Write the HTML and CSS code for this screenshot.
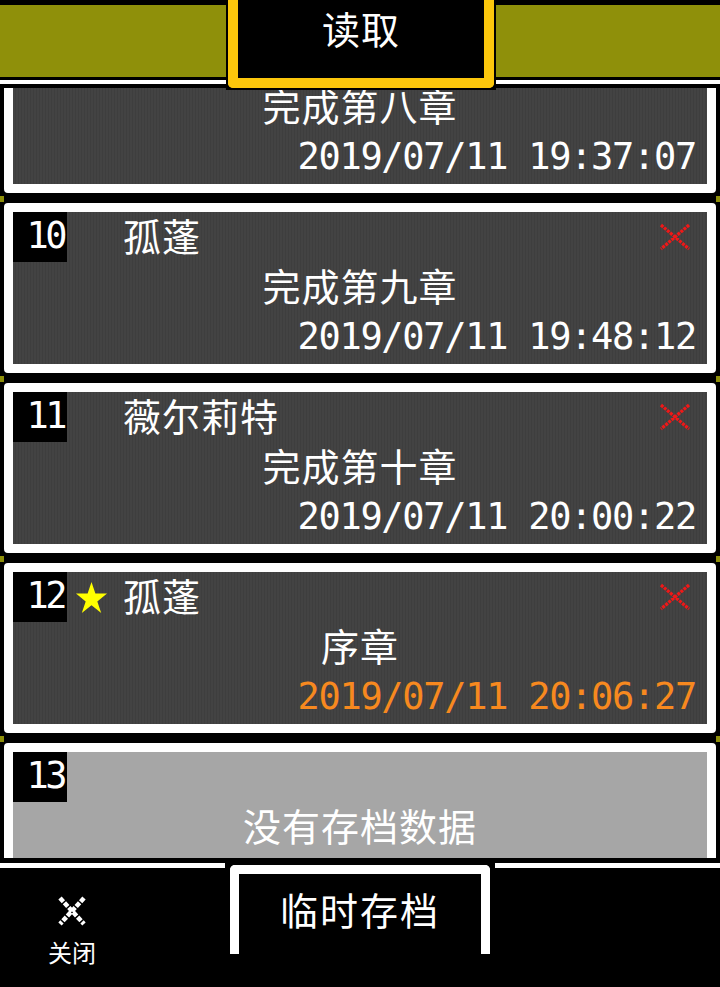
FILE: index.html
```html
<!DOCTYPE html>
<html lang="zh-CN">
<head>
    <meta charset="UTF-8">
    <meta name="viewport" content="width=device-width, initial-scale=1.0">
    <title>读取</title>
    <link rel="stylesheet" href="styles.css">
</head>
<body>
    <div class="screen">
        <div class="header">
            <div class="header-side"></div>
            <div class="header-tab"><div class="header-tab-face">读取</div></div>
            <div class="header-side"></div>
        </div>

        <div class="save-list">
            <div class="save-list-inner">
                <!-- верх карточки 9 спрятан под шапкой -->
                <div class="save-card">
                    <div class="card-head"></div>
                    <div class="card-title">完成第八章</div>
                    <div class="card-date">2019/07/11 19:37:07</div>
                </div>

                <div class="save-card">
                    <div class="card-head">
                        <div class="card-num">10</div>
                        <div class="card-mark"></div>
                        <div class="card-name">孤蓬</div>
                        <svg class="card-del" viewBox="0 0 34 30"><path d="M3 3 L31 27 M31 3 L3 27"/></svg>
                    </div>
                    <div class="card-title">完成第九章</div>
                    <div class="card-date">2019/07/11 19:48:12</div>
                </div>

                <div class="save-card">
                    <div class="card-head">
                        <div class="card-num">11</div>
                        <div class="card-mark"></div>
                        <div class="card-name">薇尔莉特</div>
                        <svg class="card-del" viewBox="0 0 34 30"><path d="M3 3 L31 27 M31 3 L3 27"/></svg>
                    </div>
                    <div class="card-title">完成第十章</div>
                    <div class="card-date">2019/07/11 20:00:22</div>
                </div>

                <div class="save-card">
                    <div class="card-head">
                        <div class="card-num">12</div>
                        <div class="card-mark">
                            <svg class="star" viewBox="0 0 34 34"><polygon points="17,1 21,13 33,13 23,21 27,33 17,25 7,33 11,21 1,13 13,13"/></svg>
                        </div>
                        <div class="card-name">孤蓬</div>
                        <svg class="card-del" viewBox="0 0 34 30"><path d="M3 3 L31 27 M31 3 L3 27"/></svg>
                    </div>
                    <div class="card-title">序章</div>
                    <div class="card-date card-date-latest">2019/07/11 20:06:27</div>
                </div>

                <div class="save-card save-card-empty">
                    <div class="card-head">
                        <div class="card-num">13</div>
                    </div>
                    <div class="card-title">没有存档数据</div>
                </div>
            </div>
        </div>

        <div class="footer">
            <div class="footer-side">
                <div class="close-btn">
                    <svg class="close-icon" viewBox="0 0 30 32"><path d="M3 3 L27 29 M27 3 L3 29"/></svg>
                    <span class="close-label">关闭</span>
                </div>
            </div>
            <div class="footer-tab">临时存档</div>
            <div class="footer-side"></div>
        </div>
    </div>
</body>
</html>
```

FILE: styles.css
```css
body {
    margin: 0;
    background-color: #000;
    color: #fff;
    font-family: "Noto Sans CJK SC", "Noto Sans", sans-serif;
    overflow: hidden;
}

.screen {
    width: 720px;
    height: 987px;
    display: flex;
    flex-direction: column;
}

/* верхняя панель */
.header {
    display: grid;
    grid-template-columns: 226px 270px 224px;
    align-items: start;
    height: 88px;
    position: relative;
    z-index: 2;
}

.header-side {
    margin-top: 5px;
    height: 83px;
    background: linear-gradient(#8f900a 0 72px, #000 72px 75px, #fff 75px 79px, #000 79px);
}

.header-tab {
    height: 90px;
    box-sizing: border-box;
    padding: 0 2px 2px;
    background-color: #000;
}

.header-tab-face {
    height: 100%;
    box-sizing: border-box;
    border: 10px solid #fcc70c;
    border-top: 0;
    border-radius: 0 0 5px 5px;
    text-align: center;
    font-size: 38px;
    letter-spacing: 1px;
    line-height: 56px;
}

/* список сохранений */
.save-list {
    flex: 0 0 770px;
    overflow: hidden;
    background-color: #000;
}

.save-list-inner {
    margin-top: -65px;
    padding: 0 4px;
    display: flex;
    flex-direction: column;
    gap: 10px;
}

.save-card {
    position: relative;
    height: 170px;
    box-sizing: border-box;
    border: 9px solid #fff;
    border-radius: 4px;
    padding-bottom: 3px;
    background: repeating-linear-gradient(90deg, #434343 0 2px, #3e3e3e 2px 3px);
    display: grid;
    grid-template-rows: 50px 50px 50px;
    align-items: center;
}

.save-card::after {
    content: "";
    position: absolute;
    left: -13px;
    right: -13px;
    top: calc(100% + 12px);
    height: 6px;
    background: linear-gradient(90deg, #8f900a 0 4px, transparent 4px calc(100% - 4px), #8f900a calc(100% - 4px));
}

.save-card-empty {
    background: #a6a6a6;
}

.card-head {
    height: 50px;
    display: flex;
    align-items: center;
}

.card-num {
    width: 54px;
    height: 50px;
    box-sizing: border-box;
    padding-right: 3px;
    background-color: #000;
    text-align: right;
    font-family: "DejaVu Sans Mono", monospace;
    font-size: 37px;
    letter-spacing: -3.5px;
    line-height: 48px;
}

.card-mark {
    width: 56px;
    height: 50px;
    display: flex;
    align-items: center;
    padding-left: 8px;
    box-sizing: border-box;
}

.star {
    width: 33px;
    height: 33px;
    fill: #ffff00;
}

.card-name,
.card-title {
    font-size: 38px;
    letter-spacing: 1px;
    line-height: 32px;
    padding-bottom: 5px;
}

.card-title {
    text-align: center;
}

.card-del {
    width: 34px;
    height: 30px;
    margin-left: auto;
    margin-right: 15px;
    stroke: #f01818;
    stroke-width: 3.2;
    stroke-dasharray: 3 1;
    fill: none;
}

.card-date {
    text-align: right;
    padding-right: 11px;
    font-family: "DejaVu Sans Mono", monospace;
    font-size: 37px;
    letter-spacing: -1.3px;
    line-height: 38px;
}

.card-date-latest {
    color: #f7891f;
}

/* нижняя панель */
.footer {
    flex: 1;
    display: grid;
    grid-template-columns: 225px 260px 225px;
    column-gap: 5px;
    align-items: start;
    padding-top: 5px;
}

.footer-side {
    border-top: 5px solid #fff;
}

.close-btn {
    width: 64px;
    margin-left: 40px;
    margin-top: 27px;
    display: flex;
    flex-direction: column;
    align-items: center;
    gap: 13px;
}

.close-icon {
    width: 30px;
    height: 32px;
    stroke: #fff;
    stroke-width: 4.5;
    stroke-dasharray: 5 1.5;
    fill: none;
}

.close-label {
    font-size: 24px;
    line-height: 24px;
}

.footer-tab {
    margin-top: 2px;
    height: 89px;
    box-sizing: border-box;
    border: 9px solid #fff;
    border-bottom: 0;
    border-radius: 5px 5px 0 0;
    text-align: center;
    font-size: 38px;
    letter-spacing: 2px;
    line-height: 70px;
}
```
